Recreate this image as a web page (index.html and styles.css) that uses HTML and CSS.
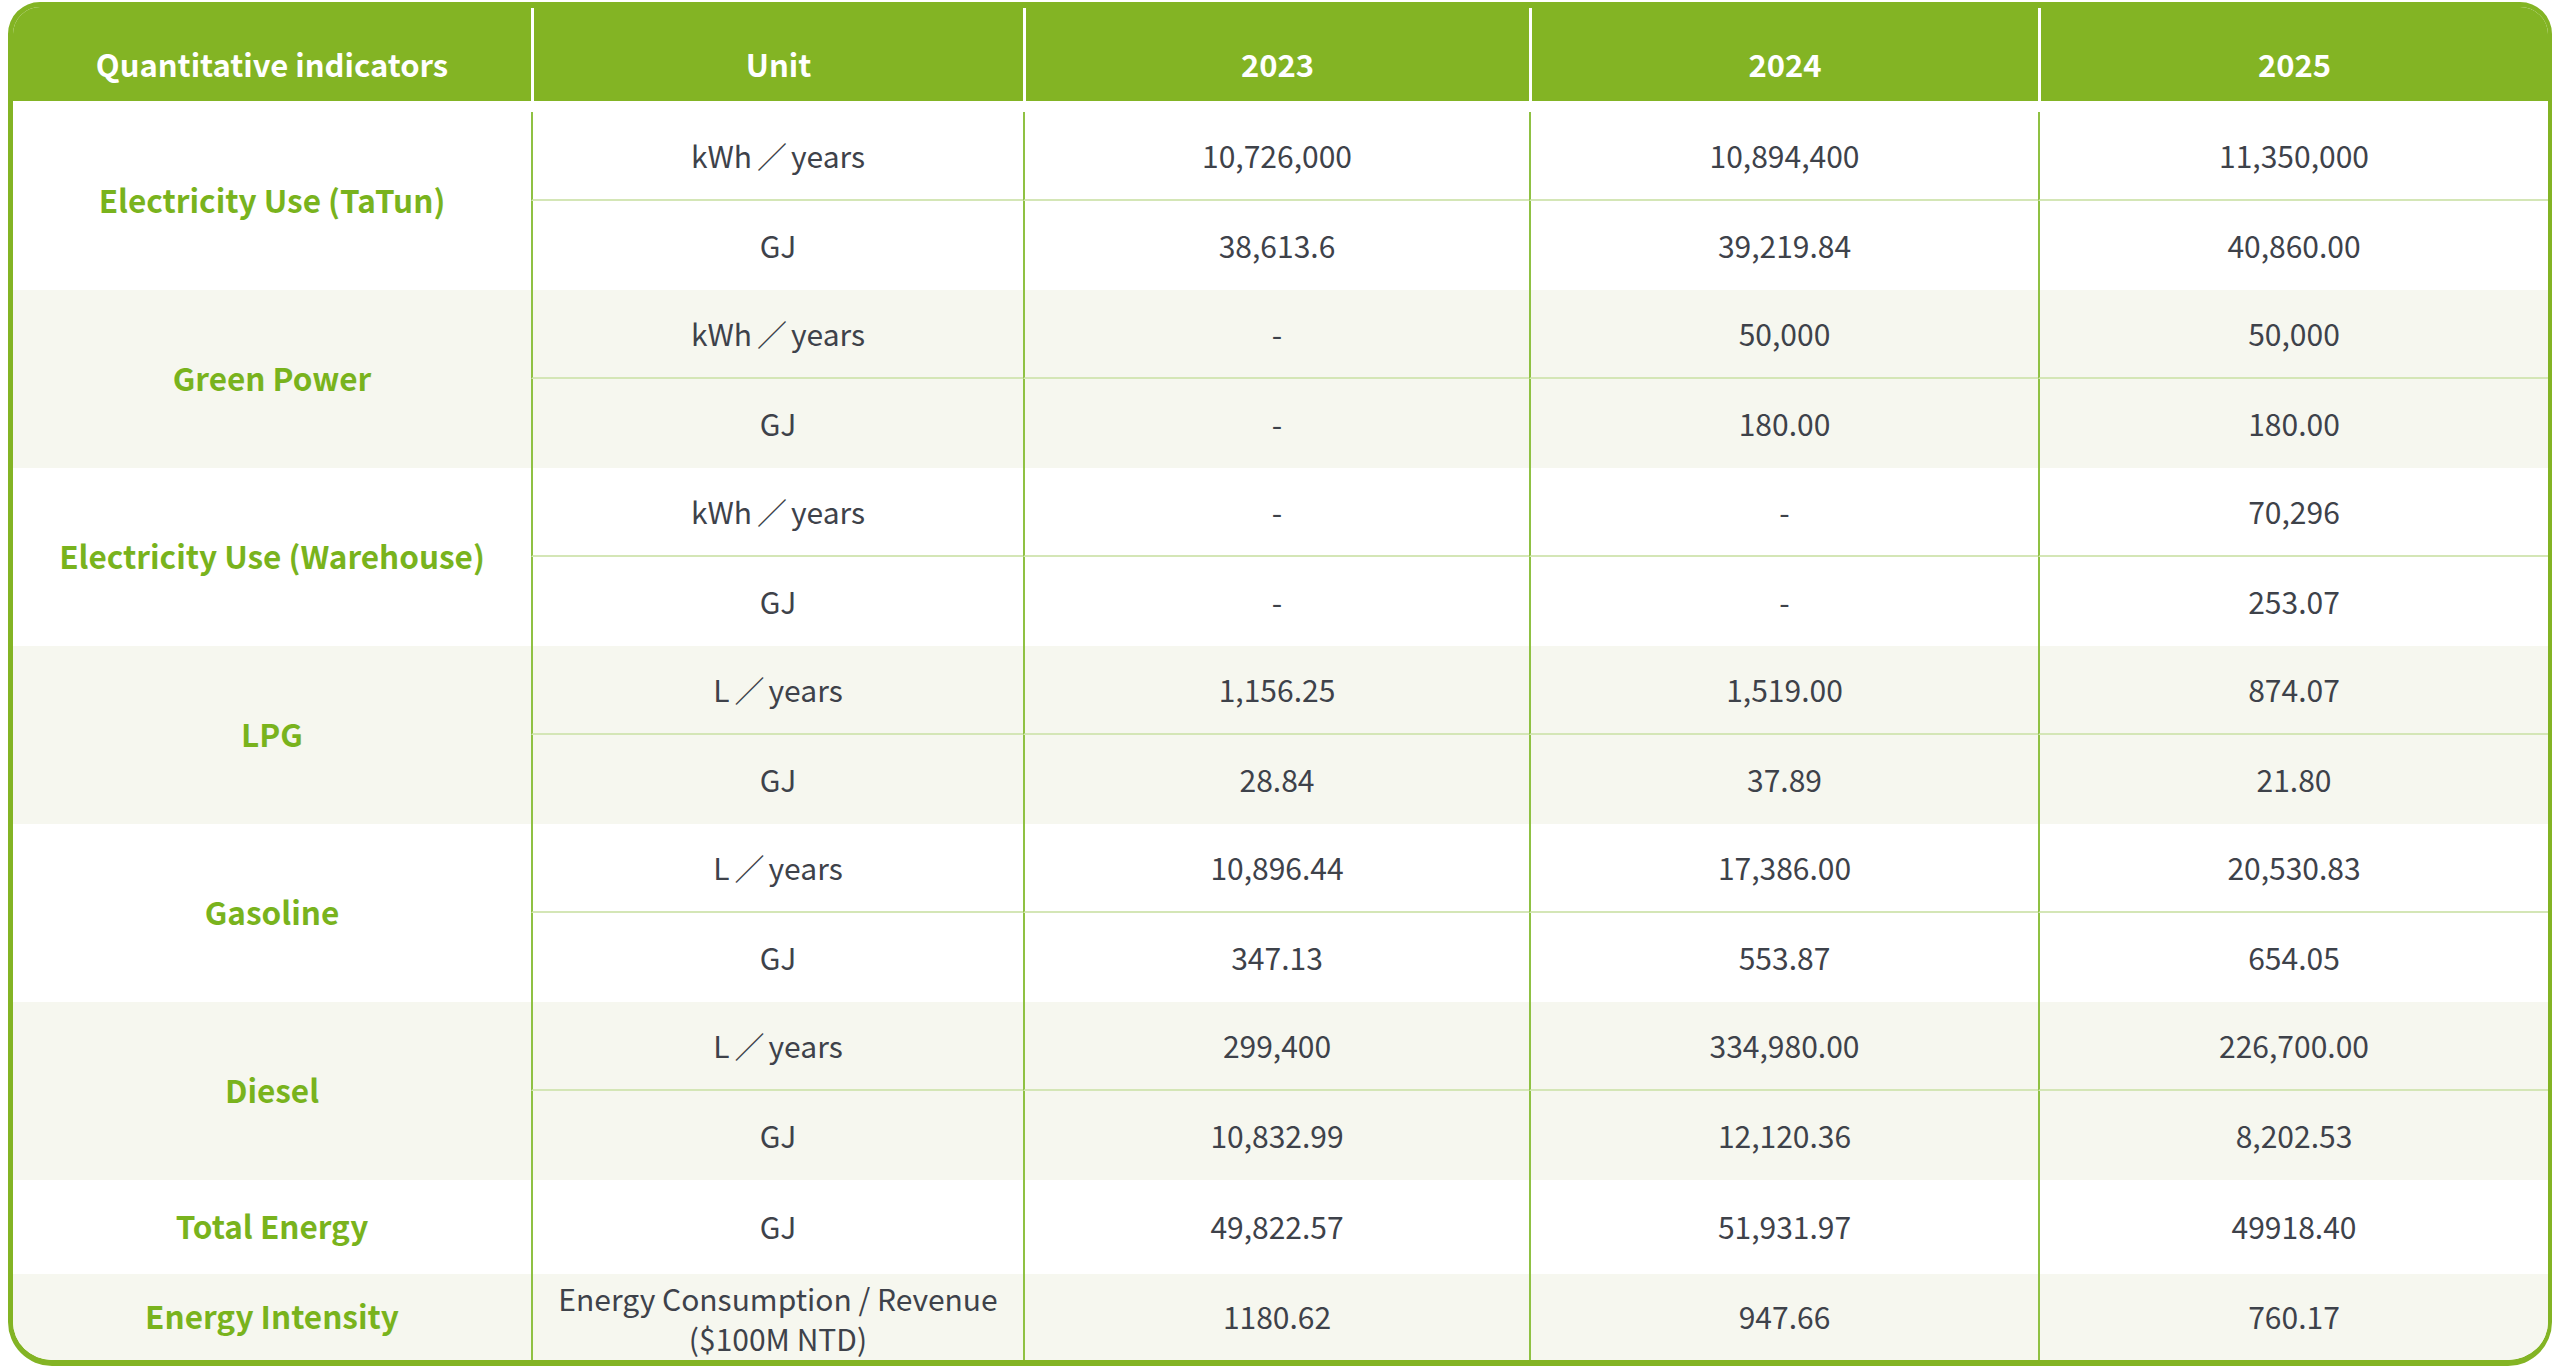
FILE: index.html
```html
<!DOCTYPE html>
<html lang="en">
<head>
<meta charset="utf-8">
<title>Energy indicators</title>
<link rel="stylesheet" href="styles.css">
</head>
<body>
<div class="table">
  <div class="head">
    <div class="hc">Quantitative indicators</div>
    <div class="hc sep">Unit</div>
    <div class="hc sep">2023</div>
    <div class="hc sep">2024</div>
    <div class="hc sep">2025</div>
  </div>
  <div class="body">
    <div class="ind span2">Electricity Use (TaTun)</div>
    <div class="c top">kWh<span class="sl">／</span>years</div><div class="c top">10,726,000</div><div class="c top">10,894,400</div><div class="c top">11,350,000</div>
    <div class="c">GJ</div><div class="c">38,613.6</div><div class="c">39,219.84</div><div class="c">40,860.00</div>

    <div class="ind span2 alt">Green Power</div>
    <div class="c top alt">kWh<span class="sl">／</span>years</div><div class="c top alt">-</div><div class="c top alt">50,000</div><div class="c top alt">50,000</div>
    <div class="c alt">GJ</div><div class="c alt">-</div><div class="c alt">180.00</div><div class="c alt">180.00</div>

    <div class="ind span2">Electricity Use (Warehouse)</div>
    <div class="c top">kWh<span class="sl">／</span>years</div><div class="c top">-</div><div class="c top">-</div><div class="c top">70,296</div>
    <div class="c">GJ</div><div class="c">-</div><div class="c">-</div><div class="c">253.07</div>

    <div class="ind span2 alt">LPG</div>
    <div class="c top alt">L<span class="sl">／</span>years</div><div class="c top alt">1,156.25</div><div class="c top alt">1,519.00</div><div class="c top alt">874.07</div>
    <div class="c alt">GJ</div><div class="c alt">28.84</div><div class="c alt">37.89</div><div class="c alt">21.80</div>

    <div class="ind span2">Gasoline</div>
    <div class="c top">L<span class="sl">／</span>years</div><div class="c top">10,896.44</div><div class="c top">17,386.00</div><div class="c top">20,530.83</div>
    <div class="c">GJ</div><div class="c">347.13</div><div class="c">553.87</div><div class="c">654.05</div>

    <div class="ind span2 alt">Diesel</div>
    <div class="c top alt">L<span class="sl">／</span>years</div><div class="c top alt">299,400</div><div class="c top alt">334,980.00</div><div class="c top alt">226,700.00</div>
    <div class="c alt">GJ</div><div class="c alt">10,832.99</div><div class="c alt">12,120.36</div><div class="c alt">8,202.53</div>

    <div class="ind">Total Energy</div>
    <div class="c">GJ</div><div class="c">49,822.57</div><div class="c">51,931.97</div><div class="c">49918.40</div>

    <div class="ind alt">Energy Intensity</div>
    <div class="c alt small"><span class="ln">Energy Consumption / Revenue</span><span class="ln">($100M NTD)</span></div><div class="c alt">1180.62</div><div class="c alt">947.66</div><div class="c alt">760.17</div>
  </div>
</div>
</body>
</html>
```
FILE: styles.css
```css
html, body {
  margin: 0;
  padding: 0;
  background: #ffffff;
}
body {
  padding: 2px 8px 0;
  font-family: "Noto Sans CJK TC", "Noto Sans", sans-serif;
}
.table {
  width: 2544px;
  box-sizing: border-box;
  border: 5px solid #83b424;
  border-right-width: 4px;
  border-bottom-width: 6px;
  border-radius: 32px 32px 44px 44px;
  overflow: hidden;
  background: #ffffff;
}
.head {
  display: grid;
  grid-template-columns: 518px 492px 506px 509px 510px;
  background: #83b424;
  height: 94px;
  box-sizing: border-box;
  padding-top: 1px;
}
.hc {
  display: flex;
  align-items: center;
  justify-content: center;
  box-sizing: border-box;
  padding-top: 19px;
  color: #ffffff;
  font-weight: 700;
  font-size: 31px;
  line-height: 40px;
}
.hc.sep {
  border-left: 3px solid #ffffff;
}
.body {
  display: grid;
  grid-template-columns: 518px 492px 506px 509px 510px;
  grid-template-rows: repeat(12, 89px) 94px 86px;
  padding-top: 11px;
}
.ind {
  display: flex;
  align-items: center;
  justify-content: center;
  box-sizing: border-box;
  padding-bottom: 4px;
  color: #79b31d;
  font-weight: 700;
  font-size: 31.5px;
  line-height: 40px;
}
.span2 {
  grid-row: span 2;
}
.c {
  display: flex;
  align-items: center;
  justify-content: center;
  box-sizing: border-box;
  padding-bottom: 2px;
  border-left: 2px solid #8fc143;
  color: #3e424a;
  font-size: 30px;
  line-height: 40px;
  text-align: center;
}
.sl {
  margin: 0 4px 0 5px;
}
.c.top {
  border-bottom: 2px solid #d4e6b6;
}
.c.small {
  flex-direction: column;
  font-size: 30px;
  line-height: 40px;
  padding-top: 2px;
  padding-bottom: 0;
}
.ln {
  display: block;
}
.alt {
  background: #f6f7ef;
}
```
